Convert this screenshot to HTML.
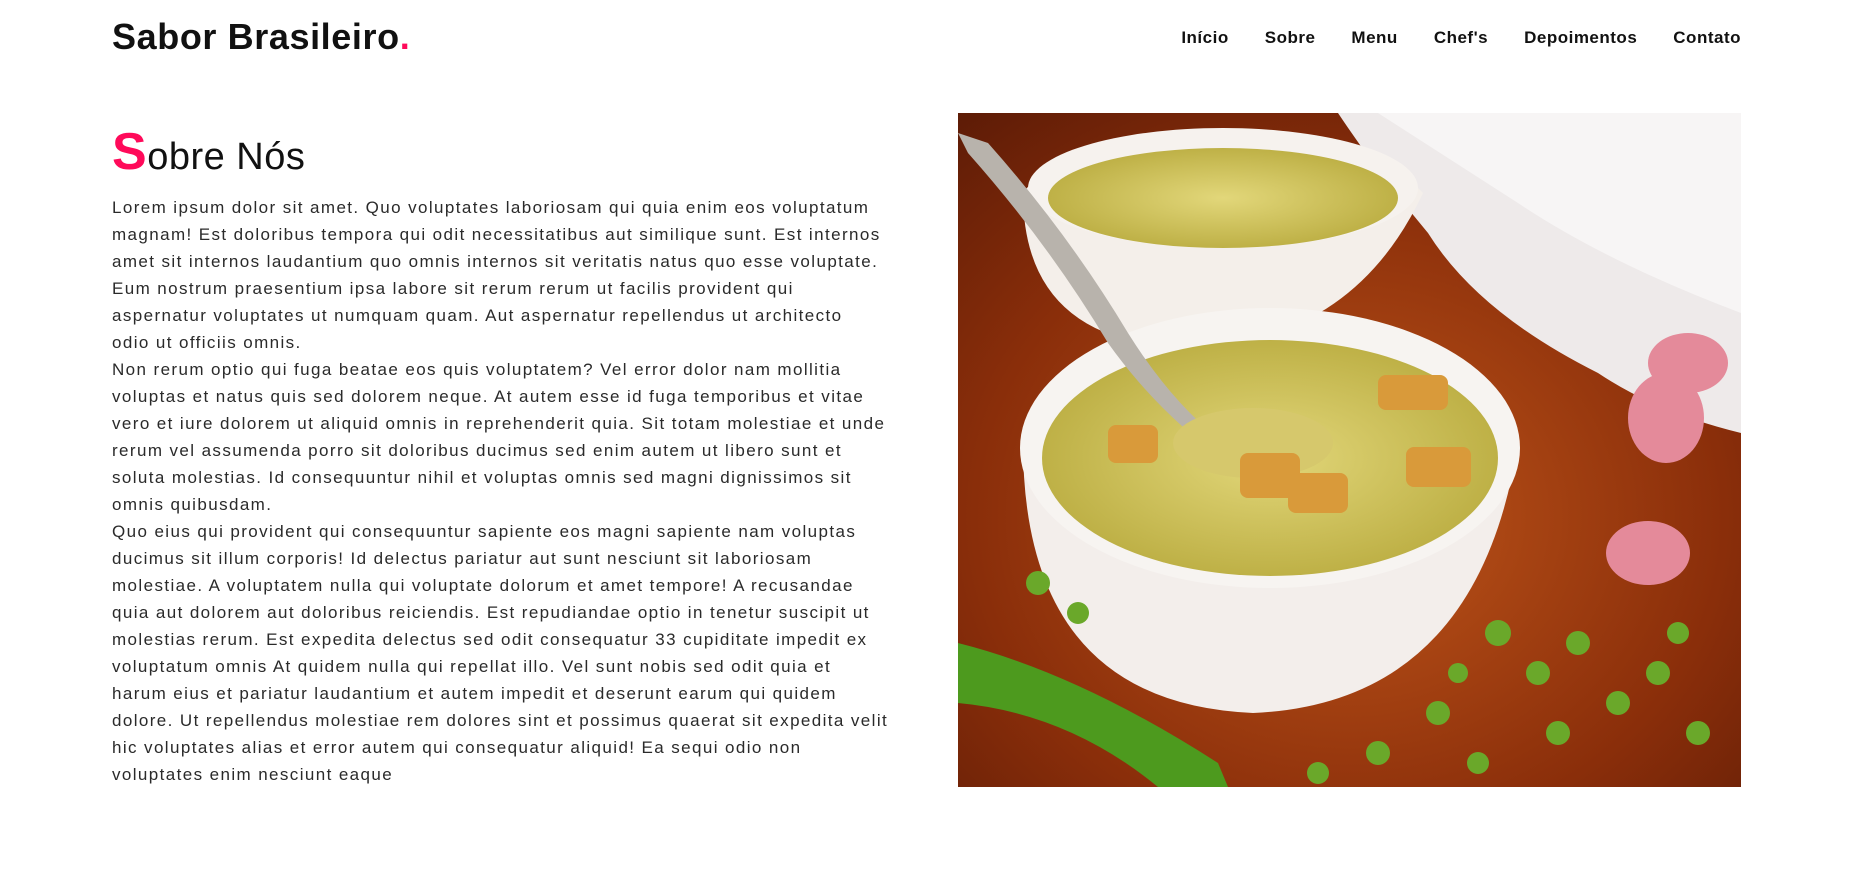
<!DOCTYPE html>
<html><head><meta charset="utf-8"><style>
*{margin:0;padding:0;box-sizing:border-box}
body{width:1853px;height:895px;background:#fff;font-family:"Liberation Sans",sans-serif;color:#111;position:relative;overflow:hidden}
.logo{position:absolute;left:112px;top:16px;font-size:36px;font-weight:700;letter-spacing:0.6px}
.logo span{color:#ff0a5a}
nav{position:absolute;right:112px;top:28px;display:flex;gap:36px;font-size:17px;font-weight:700;color:#111;letter-spacing:0.5px}
h2{position:absolute;left:112px;top:122px;font-size:38px;font-weight:400;letter-spacing:0.5px}
h2 b{color:#ff0a5a;font-size:52px;font-weight:700}
p{position:absolute;left:112px;top:194px;font-size:17px;line-height:27px;color:#2a2a2a;white-space:nowrap;letter-spacing:1.4px}
.img{position:absolute;left:958px;top:113px;width:783px;height:674px;overflow:hidden}
</style></head><body>
<div class="logo">Sabor Brasileiro<span>.</span></div>
<nav><span>Início</span><span>Sobre</span><span>Menu</span><span>Chef's</span><span>Depoimentos</span><span>Contato</span></nav>
<h2><b>S</b>obre Nós</h2>
<p>Lorem ipsum dolor sit amet. Quo voluptates laboriosam qui quia enim eos voluptatum<br>
magnam! Est doloribus tempora qui odit necessitatibus aut similique sunt. Est internos<br>
amet sit internos laudantium quo omnis internos sit veritatis natus quo esse voluptate.<br>
Eum nostrum praesentium ipsa labore sit rerum rerum ut facilis provident qui<br>
aspernatur voluptates ut numquam quam. Aut aspernatur repellendus ut architecto<br>
odio ut officiis omnis.<br>
Non rerum optio qui fuga beatae eos quis voluptatem? Vel error dolor nam mollitia<br>
voluptas et natus quis sed dolorem neque. At autem esse id fuga temporibus et vitae<br>
vero et iure dolorem ut aliquid omnis in reprehenderit quia. Sit totam molestiae et unde<br>
rerum vel assumenda porro sit doloribus ducimus sed enim autem ut libero sunt et<br>
soluta molestias. Id consequuntur nihil et voluptas omnis sed magni dignissimos sit<br>
omnis quibusdam.<br>
Quo eius qui provident qui consequuntur sapiente eos magni sapiente nam voluptas<br>
ducimus sit illum corporis! Id delectus pariatur aut sunt nesciunt sit laboriosam<br>
molestiae. A voluptatem nulla qui voluptate dolorum et amet tempore! A recusandae<br>
quia aut dolorem aut doloribus reiciendis. Est repudiandae optio in tenetur suscipit ut<br>
molestias rerum. Est expedita delectus sed odit consequatur 33 cupiditate impedit ex<br>
voluptatum omnis At quidem nulla qui repellat illo. Vel sunt nobis sed odit quia et<br>
harum eius et pariatur laudantium et autem impedit et deserunt earum qui quidem<br>
dolore. Ut repellendus molestiae rem dolores sint et possimus quaerat sit expedita velit<br>
hic voluptates alias et error autem qui consequatur aliquid! Ea sequi odio non<br>
voluptates enim nesciunt eaque</p>
<div class="img"><svg width="783" height="674" viewBox="0 0 783 674">
<defs>
<radialGradient id="w" cx="0.5" cy="0.6" r="0.8"><stop offset="0" stop-color="#c0561a"/><stop offset="0.6" stop-color="#8a2e0a"/><stop offset="1" stop-color="#5a1a06"/></radialGradient>
<radialGradient id="s" cx="0.5" cy="0.5" r="0.6"><stop offset="0" stop-color="#e2d77a"/><stop offset="1" stop-color="#b7a93c"/></radialGradient>
</defs>
<rect width="783" height="674" fill="url(#w)"/>
<path d="M380 0 L783 0 L783 320 Q700 300 640 260 Q520 200 470 120 Q420 60 380 0Z" fill="#eeeaea"/>
<path d="M420 0 L783 0 L783 200 Q650 150 560 90Z" fill="#f7f5f5"/>
<path d="M65 80 Q65 230 230 235 Q395 230 465 80 Q420 30 260 25 Q100 30 65 80Z" fill="#f4efea"/>
<ellipse cx="265" cy="75" rx="195" ry="60" fill="#f6f2ee"/>
<ellipse cx="265" cy="85" rx="175" ry="50" fill="url(#s)"/>
<path d="M65 330 Q65 590 295 600 Q520 590 560 330Z" fill="#f3eeeb"/>
<ellipse cx="312" cy="335" rx="250" ry="140" fill="#f7f4f1"/>
<ellipse cx="312" cy="345" rx="228" ry="118" fill="url(#s)"/>
<path d="M0 20 L30 30 Q110 120 170 220 Q220 300 280 340 L270 350 Q200 300 150 230 Q90 130 10 40Z" fill="#b8b3ac"/>
<ellipse cx="295" cy="330" rx="80" ry="35" fill="#d6c86c"/>
<g fill="#d99a3a"><rect x="150" y="312" width="50" height="38" rx="8"/><rect x="282" y="340" width="60" height="45" rx="8"/><rect x="330" y="360" width="60" height="40" rx="8"/><rect x="420" y="262" width="70" height="35" rx="8"/><rect x="448" y="334" width="65" height="40" rx="8"/></g>
<g fill="#e48a9a"><ellipse cx="708" cy="305" rx="38" ry="45"/><ellipse cx="730" cy="250" rx="40" ry="30"/><ellipse cx="690" cy="440" rx="42" ry="32"/></g>
<path d="M0 530 Q120 560 260 650 L270 674 L200 674 Q110 600 0 590Z" fill="#4d9a1e"/>
<g fill="#6aa82a"><circle cx="80" cy="470" r="12"/><circle cx="120" cy="500" r="11"/><circle cx="540" cy="520" r="13"/><circle cx="580" cy="560" r="12"/><circle cx="620" cy="530" r="12"/><circle cx="660" cy="590" r="12"/><circle cx="700" cy="560" r="12"/><circle cx="600" cy="620" r="12"/><circle cx="480" cy="600" r="12"/><circle cx="420" cy="640" r="12"/><circle cx="520" cy="650" r="11"/><circle cx="740" cy="620" r="12"/><circle cx="720" cy="520" r="11"/><circle cx="360" cy="660" r="11"/><circle cx="500" cy="560" r="10"/></g>
</svg></div>
</body></html>
